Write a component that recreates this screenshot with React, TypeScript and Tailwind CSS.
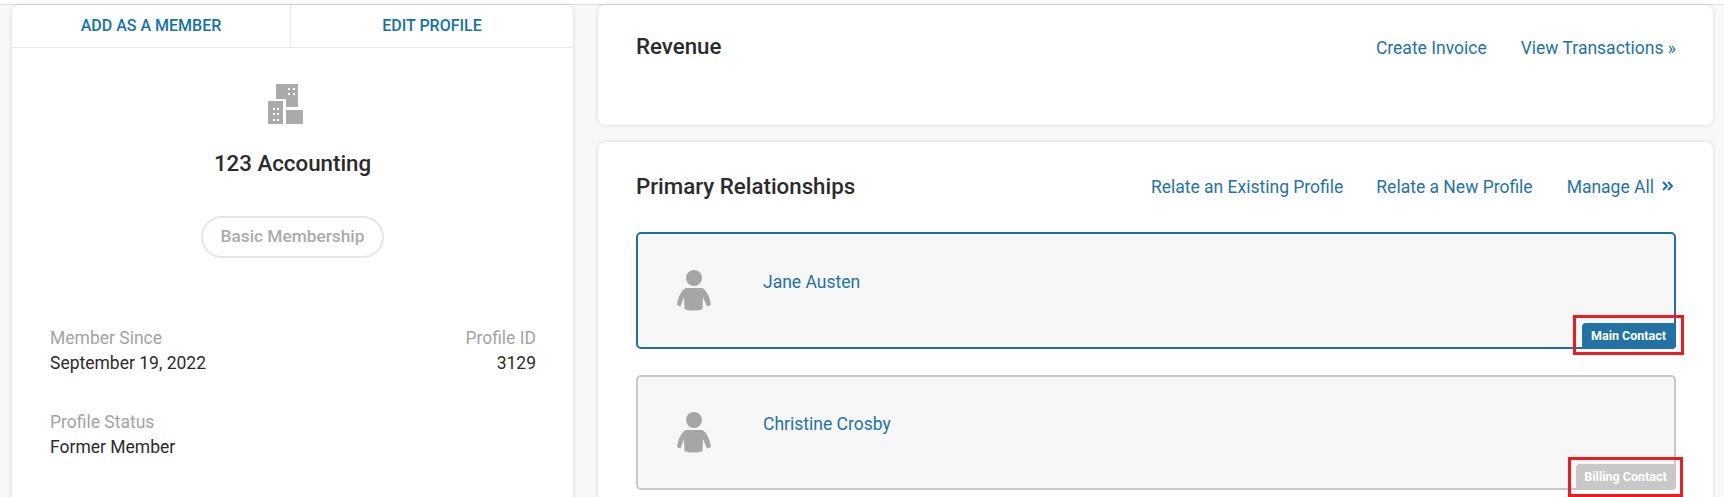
import type { ReactNode } from "react";

const font = { fontFamily: "Roboto, Arial, sans-serif" };

function BuildingIcon() {
  const windows = (cx: number[], cy: number[]) =>
    cy.flatMap((y) =>
      cx.map((x) => <rect key={`${x}-${y}`} x={x} y={y} width="2" height="2" fill="#fff" />)
    );
  return (
    <svg width="35" height="40" viewBox="0 0 35 40" className="block">
      <path d="M8 0h22v23h-12v-8h-10z" fill="#aaa" />
      <rect x="0" y="17" width="15" height="23" fill="#aaa" />
      <rect x="18" y="26" width="17" height="14" fill="#aaa" />
      {windows([20, 25], [4, 9])}
      {windows([5, 9], [24, 29, 35])}
    </svg>
  );
}

function PersonIcon() {
  return (
    <svg width="34" height="41" viewBox="0 0 34 41" className="block">
      <circle cx="17" cy="8" r="8" fill="#a6a6a6" />
      <path
        d="M9 18c-4 1-8 9-9 17l3.500 1.500 3.500-9.500.5 12c4 2 14 2 18 0l.5-12 4 9.500 4-1.500c-1-8-5-16-9-17z"
        fill="#a6a6a6"
      />
    </svg>
  );
}

function DoubleChevron() {
  return (
    <svg width="11" height="10" viewBox="0 0 11 10" fill="none" stroke="currentColor" strokeWidth="2" className="block">
      <path d="M1 1l4 4-4 4" />
      <path d="M6 1l4 4-4 4" />
    </svg>
  );
}

function Card({ className, children }: { className: string; children: ReactNode }) {
  return (
    <div className={`rounded-lg bg-white shadow-[0_0_4px_rgba(0,0,0,0.14)] ${className}`}>{children}</div>
  );
}

function Relation({
  name,
  badge,
  active,
  className,
  nameClass,
  iconClass,
}: {
  name: string;
  badge: string;
  active?: boolean;
  className: string;
  nameClass: string;
  iconClass: string;
}) {
  return (
    <div
      className={`relative flex items-start rounded-[5px] border-2 bg-[#f7f7f7] ${
        active ? "border-[#1f6fa3]" : "border-[#c8c8c8]"
      } ${className}`}
    >
      <div className={`ml-[39px] ${iconClass}`}>
        <PersonIcon />
      </div>
      <div className={`ml-[52px] text-[17.500px] leading-[24px] text-[#1f72a8] ${nameClass}`}>{name}</div>
      <div
        className={`absolute -bottom-[2px] -right-[2px] flex h-[26px] items-center justify-center rounded-[4px] pb-[1px] pr-[1px] text-[12.500px] leading-none font-bold text-white ${
          active ? "w-[94px] bg-[#2272a6]" : "w-[100px] bg-[#c8c8c8]"
        }`}
      >
        {badge}
      </div>
    </div>
  );
}

export default function App() {
  return (
    <div className="relative h-[497px] w-[1724px] overflow-hidden bg-[#f8f8f8]" style={font}>
      <div className="h-[5px] border-b border-[#dddddd] bg-white" />
      <div className="flex items-start pl-[12px]">
        <Card className="h-[520px] w-[561px]">
          <div className="flex h-[43px] border-b border-[#e8e8e8] text-[16px] font-medium text-[#1472a8]">
            <div className="flex w-[279px] items-center justify-center border-r border-[#e8e8e8]">ADD AS A MEMBER</div>
            <div className="flex flex-1 items-center justify-center">EDIT PROFILE</div>
          </div>
          <div className="flex flex-col items-center">
            <div className="mt-[36px] mr-[14px]">
              <BuildingIcon />
            </div>
            <h2 className="mt-[25px] text-[22.300px] leading-[28px] font-medium text-[#2b2b2b]">123 Accounting</h2>
            <div className="mt-[39px] flex h-[42px] w-[183px] items-center justify-center rounded-[21px] border-2 border-[#e6e6e6] text-[17.300px] font-medium text-[#aaaaaa]">
              Basic Membership
            </div>
          </div>
          <div className="mt-[68px] pr-[37px] pl-[38px] text-[17.500px] leading-[25px]">
            <div className="flex justify-between">
              <div>
                <div className="text-[#a3a3a3]">Member Since</div>
                <div className="text-[#2b2b2b]">September 19, 2022</div>
              </div>
              <div className="text-right">
                <div className="text-[#a3a3a3]">Profile ID</div>
                <div className="text-[#2b2b2b]">3129</div>
              </div>
            </div>
            <div className="mt-[34px] text-[#a3a3a3]">Profile Status</div>
            <div className="text-[#2b2b2b]">Former Member</div>
          </div>
        </Card>
        <div className="ml-[25px] flex w-[1115px] flex-col gap-[17px]">
          <Card className="h-[120px] pr-[37px] pl-[38px]">
            <div className="flex items-start justify-between pt-[27px]">
              <h2 className="text-[22.300px] leading-[28px] font-medium text-[#2b2b2b]">Revenue</h2>
              <div className="flex gap-[34px] pt-[3px] text-[17.500px] text-[#1f72a8]">
                <span>Create Invoice</span>
                <span>View Transactions »</span>
              </div>
            </div>
          </Card>
          <Card className="h-[400px] pr-[37px] pl-[38px]">
            <div className="flex items-center justify-between pt-[30px]">
              <h2 className="text-[22.300px] leading-[28px] font-medium text-[#2b2b2b]">Primary Relationships</h2>
              <div className="flex text-[17.500px] text-[#1f72a8] pt-[2px]">
                <span className="mr-[33px]">Relate an Existing Profile</span>
                <span className="mr-[34px]">Relate a New Profile</span>
                <span className="flex items-center gap-[8px] pr-[3px]">
                  Manage All
                  <span className="-mt-[3px]">
                    <DoubleChevron />
                  </span>
                </span>
              </div>
            </div>
            <div className="mt-[32px] flex flex-col gap-[26px]">
              <Relation name="Jane Austen" badge="Main Contact" active className="h-[117px]" nameClass="mt-[36px]" iconClass="mt-[36px]" />
              <Relation name="Christine Crosby" badge="Billing Contact" className="h-[115px]" nameClass="mt-[35px]" iconClass="mt-[35px]" />
            </div>
          </Card>
        </div>
      </div>
      <div className="absolute top-[315px] left-[1573px] h-[40px] w-[111px] border-[3px] border-[#ed1c24]" />
      <div className="absolute top-[457px] left-[1568px] h-[40px] w-[115px] border-[3px] border-[#ed1c24]" />
    </div>
  );
}
